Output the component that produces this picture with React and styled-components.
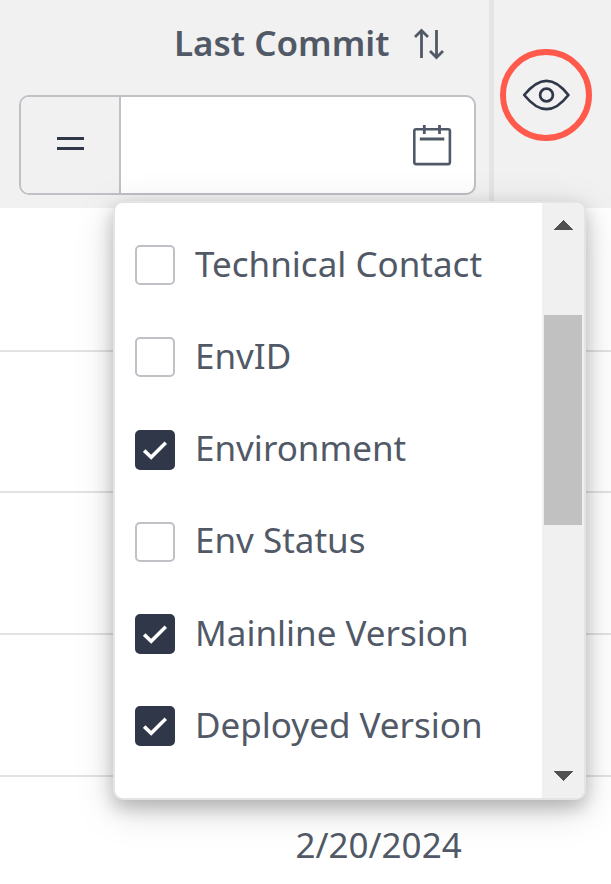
import React from 'react';
import styled, { createGlobalStyle } from 'styled-components';

const GlobalStyle = createGlobalStyle`
  *, *::before, *::after { box-sizing: border-box; }
  body { margin: 0; background: #fff; }
`;

const Page = styled.main`
  position: relative;
  width: 611px;
  height: 884px;
  overflow: hidden;
  background: #fff;
  color: #515967;
  font: 400 35px/48px "Noto Sans", sans-serif;
`;

const TableHeader = styled.header`
  display: flex;
  height: 208px;
  background: #f1f1f1;
`;

const ColumnHeader = styled.section`
  width: 494px;
  height: 201px;
  padding: 20px 13px 0 19px;
  border-right: 5px solid #e4e4e7;
`;

const TitleRow = styled.div`
  display: flex;
  align-items: center;
  height: 48px;
  margin: 0 0 27px 155px;
`;

const Title = styled.h2`
  margin: 0;
  padding-bottom: 2px;
  font-size: 35px;
  font-weight: 600;
  line-height: 46px;
  white-space: nowrap;
  width: 240px;
`;

const Filter = styled.div`
  display: flex;
  width: 457px;
  height: 100px;
  border: 2px solid #c0c0c7;
  border-radius: 10px;
  overflow: hidden;
  background: #fff;
`;

const Operator = styled.button`
  display: flex;
  align-items: center;
  justify-content: center;
  width: 100px;
  padding: 0 0 4px;
  border: 0;
  border-right: 2px solid #c0c0c7;
  background: #f1f1f1;
`;

const DateField = styled.div`
  display: flex;
  flex: 1;
  align-items: center;
  justify-content: flex-end;
  padding: 0 22px 0 0;
`;

const VisibilityCell = styled.section`
  flex: 1;
  padding: 49px 0 0 6px;
`;

const EyeButton = styled.button`
  display: flex;
  align-items: center;
  justify-content: center;
  width: 92px;
  height: 92px;
  padding: 0;
  border: 6px solid #ff5a4b;
  border-radius: 50%;
  background: transparent;
`;

const TableRow = styled.div`
  height: ${({ $height }) => $height}px;
  border-bottom: 2px solid #e2e2e2;
`;

const DateCell = styled.div`
  padding: 44px 0 0 295.5px;
  line-height: 48px;
  white-space: nowrap;
`;

const Menu = styled.aside`
  position: absolute;
  left: 113px;
  top: 201px;
  display: flex;
  width: 473px;
  height: 599px;
  border: 2px solid #e4e4e4;
  border-radius: 10px;
  overflow: hidden;
  background: #fff;
  box-shadow: 0 8px 18px rgba(0, 0, 0, 0.22), 0 10px 40px rgba(0, 0, 0, 0.15);
`;

const Options = styled.div`
  flex: 1;
  padding: 16px 0 0 20px;
`;

const Option = styled.label`
  display: flex;
  align-items: center;
  gap: 20px;
  height: 92.25px;
  white-space: nowrap;
`;

const Box = styled.span`
  display: flex;
  flex: none;
  align-items: center;
  justify-content: center;
  width: 40px;
  height: 40px;
  border: 2px solid ${({ $checked }) => ($checked ? '#303748' : '#c0c0c7')};
  border-radius: 5px;
  background: ${({ $checked }) => ($checked ? '#303748' : '#fff')};
`;

const OptionText = styled.span`
  padding-bottom: 3px;
`;

const ScrollTrack = styled.div`
  display: flex;
  flex-direction: column;
  align-items: center;
  width: 42px;
  background: #f0f0f0;
`;

const ScrollThumb = styled.div`
  width: 38px;
  height: 210px;
  margin: 85px 0 246px;
  background: #c1c1c1;
`;

const Arrow = styled.svg`
  display: block;
  flex: none;
  width: 20px;
  height: 10px;
  margin-top: ${({ $top }) => $top}px;
`;

const columns = [
  { name: 'Technical Contact', checked: false },
  { name: 'EnvID', checked: false },
  { name: 'Environment', checked: true },
  { name: 'Env Status', checked: false },
  { name: 'Mainline Version', checked: true },
  { name: 'Deployed Version', checked: true },
];

const SortIcon = () => (
  <svg width="30" height="32" viewBox="0 0 30 32" fill="none" stroke="#515967" strokeWidth="2.8">
    <path d="M7.5 30V3M1 9l6.5-6.5L14 9M22.5 2v27M16 23l6.5 6.5L29 23" />
  </svg>
);

const EqualsIcon = () => (
  <svg width="27" height="15" viewBox="0 0 27 15" fill="#303748">
    <path d="M0 1h27v3H0zM0 11h27v3H0z" />
  </svg>
);

const CalendarIcon = () => (
  <svg width="40" height="42" viewBox="0 0 40 42" fill="none" stroke="#515967">
    <rect x="2.3" y="5.3" width="35.6" height="34.8" rx="1.8" strokeWidth="2.6" />
    <path d="M12.3 1v9M27.5 1v9M7.8 15H32.3" strokeWidth="2.8" />
  </svg>
);

const EyeIcon = () => (
  <svg width="48" height="32" viewBox="0 0 48 32" fill="none" stroke="#303748" strokeWidth="2.7">
    <path d="M2.2 16C10 6.4 17 1.8 24.5 1.8S39 6.4 46.4 16C39 25.6 32 30.2 24.5 30.2S10 25.6 2.2 16Z" strokeLinejoin="round" />
    <circle cx="24.5" cy="16" r="6.4" />
  </svg>
);

const CheckIcon = () => (
  <svg width="24" height="20" viewBox="0 0 24 20" fill="none" stroke="#fff" strokeWidth="3.6">
    <path d="M1.2 10.6l7 6.7L22.8 2.7" />
  </svg>
);

export default function App() {
  return (
    <>
      <GlobalStyle />
      <Page>
        <TableHeader>
          <ColumnHeader>
            <TitleRow>
              <Title>Last Commit</Title>
              <SortIcon />
            </TitleRow>
            <Filter>
              <Operator aria-label="Equals"><EqualsIcon /></Operator>
              <DateField><CalendarIcon /></DateField>
            </Filter>
          </ColumnHeader>
          <VisibilityCell>
            <EyeButton aria-label="Column visibility"><EyeIcon /></EyeButton>
          </VisibilityCell>
        </TableHeader>
        <TableRow $height={144} />
        <TableRow $height={141} />
        <TableRow $height={142} />
        <TableRow $height={142} />
        <DateCell>2/20/2024</DateCell>
        <Menu>
          <Options>
            {columns.map(({ name, checked }) => (
              <Option key={name}>
                <Box $checked={checked}>{checked && <CheckIcon />}</Box>
                <OptionText>{name}</OptionText>
              </Option>
            ))}
          </Options>
          <ScrollTrack>
            <Arrow $top={17} viewBox="0 0 20 10" shapeRendering="crispEdges">
              <path d="M10 0L20 10H0z" fill="#505050" />
            </Arrow>
            <ScrollThumb />
            <Arrow $top={0} viewBox="0 0 20 10" shapeRendering="crispEdges">
              <path d="M0 0H20L10 10z" fill="#505050" />
            </Arrow>
          </ScrollTrack>
        </Menu>
      </Page>
    </>
  );
}
